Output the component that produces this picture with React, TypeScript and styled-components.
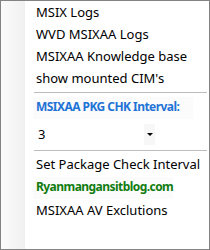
import React from "react";
import styled, { createGlobalStyle } from "styled-components";

const Global = createGlobalStyle`
  html, body { margin: 0; padding: 0; background: #fff; }
  body { font-family: "Noto Sans", "Liberation Sans", sans-serif; }
`;

const Menu = styled.div`
  width: 210px;
  height: 250px;
  box-sizing: border-box;
  border: 1px solid #838383;
  background: linear-gradient(to right, #fbfbfb 0px, #f0f0f0 24px, #ffffff 24px);
  display: flex;
  flex-direction: column;
  padding: 1px 2px 0 32px;
`;

const Item = styled.div<{ $color?: string; $bold?: boolean }>`
  height: 22px;
  box-sizing: border-box;
  padding: 0 0 2px 3px;
  display: flex;
  align-items: center;
  font-size: ${(p) => (p.$bold ? 12 : 13)}px;
  letter-spacing: ${(p) => (p.$bold ? -0.55 : 0)}px;
  color: ${(p) => p.$color || "#000"};
  font-weight: ${(p) => (p.$bold ? 700 : 400)};
  white-space: nowrap;
  line-height: 16px;
`;

const Boxed = styled(Item)<{ $w: number }>`
  width: ${(p) => p.$w}px;
  margin: 1px 0;
  background: #fbfbfb;
`;

const Separator = styled.div<{ $top: number; $bottom: number }>`
  height: 1px;
  background: #bdbdbd;
  margin: ${(p) => p.$top}px 0 ${(p) => p.$bottom}px 1px;
`;

const Combo = styled.div`
  width: 122px;
  height: 21px;
  margin-top: 4px;
  display: flex;
  align-items: center;
  justify-content: space-between;
  font-size: 13px;
  color: #000;
`;

const ComboValue = styled.span`
  padding-left: 5px;
  padding-bottom: 1px;
`;

const Arrow = styled.div`
  width: 11px;
  height: 21px;
  background: #f7f7f7;
  display: flex;
  align-items: center;
  justify-content: center;
`;

export default function App() {
  return (
    <>
      <Global />
      <Menu>
        <Item>MSIX Logs</Item>
        <Item>WVD MSIXAA Logs</Item>
        <Item>MSIXAA Knowledge base</Item>
        <Item>show mounted CIM's</Item>
        <Separator $top={2} $bottom={3} />
        <Boxed $w={160} $bold $color="#1f73d6">MSIXAA PKG CHK Interval:</Boxed>
        <Combo>
          <ComboValue>3</ComboValue>
          <Arrow>
            <svg width="6" height="4" viewBox="0 0 6 4">
              <path d="M0 0H6L3 3Z" fill="#000" />
            </svg>
          </Arrow>
        </Combo>
        <Separator $top={5} $bottom={3} />
        <Item>Set Package Check Interval</Item>
        <Boxed $w={140} $bold $color="#107c10">Ryanmangansitblog.com</Boxed>
        <Item>MSIXAA AV Exclutions</Item>
      </Menu>
    </>
  );
}
